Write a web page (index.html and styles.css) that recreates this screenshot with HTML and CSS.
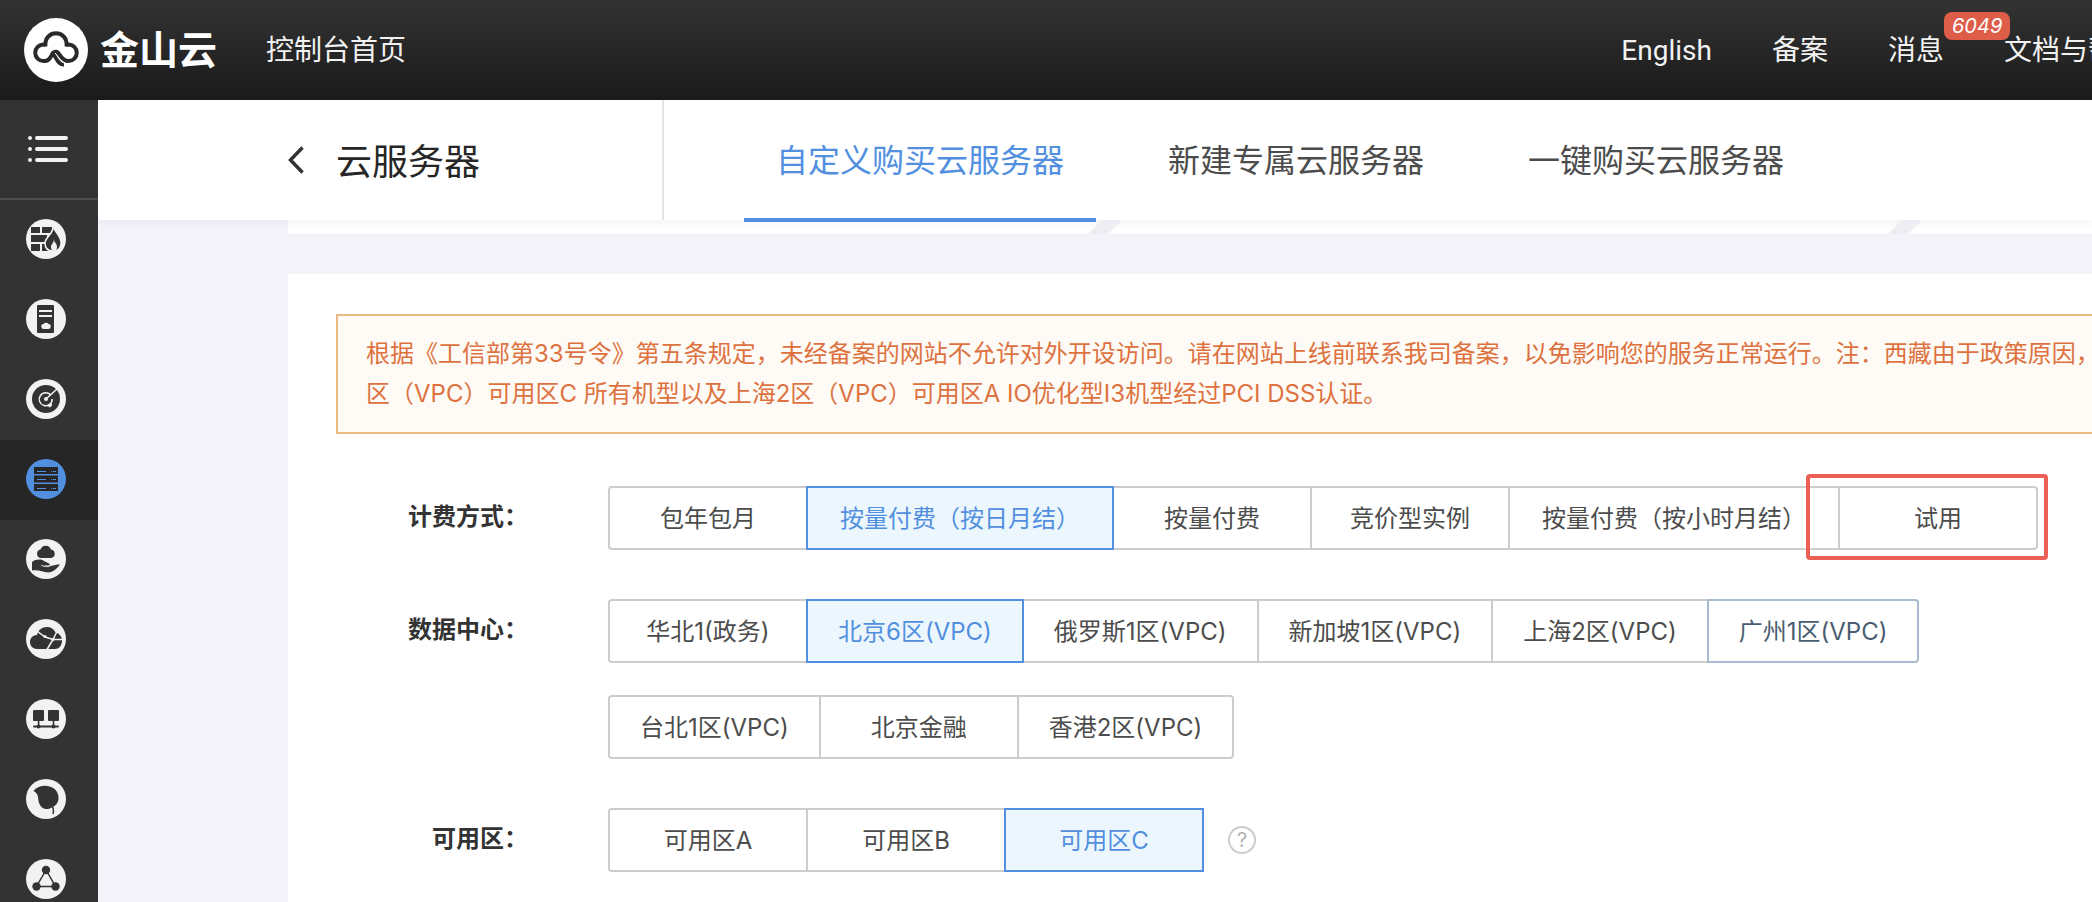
FILE: index.html
```html
<!DOCTYPE html>
<html lang="zh-CN">

<head>
    <meta charset="UTF-8">
    <meta name="viewport" content="width=device-width, initial-scale=1.0">
    <title>云服务器 - 金山云</title>
    <link rel="stylesheet" href="styles.css">
</head>

<body>
    <!-- Top bar -->
    <header class="topbar">
        <a class="logo" href="#">
            <svg class="logo-mark" viewBox="0 0 64 64" aria-hidden="true">
                <circle cx="32" cy="32" r="32" fill="#fff"/>
                <g fill="none" stroke="#2a2a2a" stroke-width="4" stroke-linejoin="round">
                    <path d="M21.500 26.500h-2a8.300 8.300 0 0 0 0 16.600c5.500 0 7.500-4 9.500-8.500"/>
                    <path d="M21.500 28.500c-1-8 4-13.200 10.500-13.200s11.500 5.200 10.500 13.200"/>
                    <path d="M42 26.500h2.500a8.300 8.300 0 0 1 0 16.600c-5 0-7-3.500-9-6.500s-4-4-7-1.500"/>
                    <path d="M28.500 35c3.500 2 4.500 12 11.500 11.500" stroke-width="4"/>
                </g>
                <path d="M31 35c3 3 4 9 10 10" fill="none" stroke="#fff" stroke-width="1"/>
            </svg>
            <span class="logo-text">金山云</span>
        </a>
        <a class="top-link" href="#">控制台首页</a>
        <nav class="top-nav">
            <a class="top-link" href="#">English</a>
            <a class="top-link" href="#">备案</a>
            <a class="top-link has-badge" href="#">消息<i class="badge">6049</i></a>
            <a class="top-link" href="#">文档与帮助</a>
        </nav>
    </header>

    <div class="layout">
        <!-- Side menu -->
        <nav class="sidebar">
            <button class="menu-toggle" type="button" aria-label="菜单">
                <svg width="40" height="26" viewBox="0 0 40 26" fill="#f2f2f2">
                    <circle cx="2" cy="2" r="2"/><rect x="7" y="0" width="33" height="4" rx="2"/>
                    <circle cx="2" cy="13" r="2"/><rect x="7" y="11" width="33" height="4" rx="2"/>
                    <circle cx="2" cy="24" r="2"/><rect x="7" y="22" width="33" height="4" rx="2"/>
                </svg>
            </button>
            <a class="side-item" href="#" aria-label="安全">
                <svg class="side-icon" viewBox="0 0 40 40">
                    <circle cx="20" cy="20" r="20" fill="#f2f2f2"/>
                    <path fill="#333" d="M5 8h9v6H5zM16 8h10v6H16zM5 16h16v7H5zM5 25h9v7H5zM16 25h8v7h-8z"/>
                    <path fill="#333" stroke="#f2f2f2" stroke-width="1.500" d="M27 7c1 6 9 10 8 18-.5 4-3 7-8 7-5 0-8-3-8-8 0-6 9-9 8-17z"/>
                    <path fill="#f2f2f2" d="M28 20c0 4 3 4 3 8 0 2-1 4-3 4s-3-2-3-4c0-3 3-4 3-8z"/>
                </svg>
            </a>
            <a class="side-item" href="#" aria-label="物理机">
                <svg class="side-icon" viewBox="0 0 40 40">
                    <circle cx="20" cy="20" r="20" fill="#f2f2f2"/>
                    <rect x="11" y="6" width="17" height="28" rx="1" fill="#333"/>
                    <path fill="#f2f2f2" d="M13 11h13v2H13zM13 16h13v2H13zM18 30a2.500 2.500 0 0 1-.5-5 3 3 0 0 1 5 0 2.500 2.500 0 0 1-.5 5z"/>
                </svg>
            </a>
            <a class="side-item" href="#" aria-label="监控">
                <svg class="side-icon" viewBox="0 0 40 40">
                    <circle cx="20" cy="20" r="20" fill="#f2f2f2"/>
                    <circle cx="20" cy="20" r="14" fill="#333"/>
                    <g fill="none" stroke="#f2f2f2" stroke-width="1.500">
                        <path d="M25 16.500a6.500 6.500 0 1 0 1.200 3.500M20 20L31 10"/>
                    </g>
                    <circle cx="20" cy="20" r="2" fill="#f2f2f2"/>
                    <path fill="#f2f2f2" d="M20.500 26.500l5-3 .5 3-2 2z"/>
                </svg>
            </a>
            <a class="side-item active" href="#" aria-label="云服务器">
                <svg class="side-icon" viewBox="0 0 40 40">
                    <circle cx="20" cy="20" r="20" fill="#528fdf"/>
                    <path fill="#262626" d="M8 8h24v7H8zM8 16.500h24v7H8zM8 25h24v7H8z"/>
                    <path stroke="#528fdf" d="M11 12.500h9M25 12.500h1M27 12.500h3M11 20.500h9M25 20.500h1M27 20.500h3M11 29.500h9M25 29.500h1M27 29.500h3"/>
                </svg>
            </a>
            <a class="side-item" href="#" aria-label="托管">
                <svg class="side-icon" viewBox="0 0 40 40">
                    <circle cx="20" cy="20" r="20" fill="#f2f2f2"/>
                    <path fill="#333" d="M15 19a4.300 4.300 0 0 1-.5-8.500 5.500 5.500 0 0 1 10.500 0 4.300 4.300 0 0 1 0 8.500z"/>
                    <path fill="#333" d="M6 23c4-3 9-3 12-1l5 2.500c1.500 1 1 2-1 2l-6-.5 6 1.500c3 0 6-2 12-2-3 4-7 8-12 8-5 0-9-3-16-2z"/>
                    <path fill="none" stroke="#f2f2f2" stroke-width=".8" d="M15 26c2 1.500 5 2 8 1.500"/>
                </svg>
            </a>
            <a class="side-item" href="#" aria-label="云网络">
                <svg class="side-icon" viewBox="0 0 40 40">
                    <circle cx="20" cy="20" r="20" fill="#f2f2f2"/>
                    <path fill="#333" d="M11 30c-4 0-7-3-7-7s3-7 7-7c1-5 5-8 10-8 4 0 7 2 8.500 5.500 4 1 6.500 4 6.500 8 0 5-3 8.500-7 8.500z"/>
                    <path fill="none" stroke="#f2f2f2" stroke-width="1.500" d="M11 12l8 6 8 2.500h9M27 20.500l4-8M27 20.500l-6 10"/>
                    <circle cx="19" cy="17.500" r="1.500" fill="#f2f2f2"/>
                    <circle cx="27" cy="20.500" r="1.500" fill="#f2f2f2"/>
                </svg>
            </a>
            <a class="side-item" href="#" aria-label="负载均衡">
                <svg class="side-icon" viewBox="0 0 40 40">
                    <circle cx="20" cy="20" r="20" fill="#f2f2f2"/>
                    <g fill="#333">
                        <rect x="7" y="11" width="11" height="11" rx="1"/>
                        <rect x="22" y="11" width="11" height="11" rx="1"/>
                        <rect x="7" y="26.500" width="26" height="2" rx="1"/>
                        <path d="M11.800 22h1.600v4h-1.600zM26.700 22h1.600v4h-1.600z"/>
                        <circle cx="12.500" cy="27.500" r="2"/><circle cx="27.500" cy="27.500" r="2"/>
                    </g>
                </svg>
            </a>
            <a class="side-item" href="#" aria-label="存储">
                <svg class="side-icon" viewBox="0 0 40 40">
                    <circle cx="20" cy="20" r="20" fill="#f2f2f2"/>
                    <path fill="#333" d="M7.500 12c4-5 11-6 16-4.500 6 1.500 9.500 6.500 9 12.500-.5 4-3 7-6 8-3 2.500-8 3-11 0-3-3-3-7-3.500-10-.5-3-1.500-4-4.500-6z"/>
                    <path fill="none" stroke="#333" stroke-width="1.500" d="M26 27c1.500 2 2 4 1 8"/>
                </svg>
            </a>
            <a class="side-item" href="#" aria-label="节点">
                <svg class="side-icon" viewBox="0 0 40 40">
                    <circle cx="20" cy="20" r="20" fill="#f2f2f2"/>
                    <path fill="none" stroke="#333" stroke-width="1.500" d="M20 11L10.500 27.500h19z"/>
                    <g fill="#333">
                        <circle cx="20" cy="11" r="4.200"/><circle cx="10.500" cy="27.500" r="4.200"/><circle cx="29.500" cy="27.500" r="4.200"/>
                    </g>
                </svg>
            </a>
        </nav>

        <main class="main">
            <!-- Page title and tabs -->
            <div class="page-head">
                <div class="page-title">
                    <a class="back" href="#" aria-label="返回">
                        <svg width="16" height="28" viewBox="0 0 16 28" fill="none" stroke="#333" stroke-width="3.500">
                            <path d="M14.500 1.500L2.500 14l12 12.500"/>
                        </svg>
                    </a>
                    <h1>云服务器</h1>
                </div>
                <nav class="tabs">
                    <a class="tab active" href="#">自定义购买云服务器</a>
                    <a class="tab" href="#">新建专属云服务器</a>
                    <a class="tab" href="#">一键购买云服务器</a>
                </nav>
            </div>

            <div class="content">
                <!-- Bottom edge of the step bar -->
                <div class="steps">
                    <div class="step first"></div>
                    <div class="step"></div>
                </div>

                <section class="panel">
                    <p class="notice">
                        根据《工信部第33号令》第五条规定，未经备案的网站不允许对外开设访问。请在网站上线前联系我司备案，以免影响您的服务正常运行。注：西藏由于政策原因，<br>
                        区（VPC）可用区C 所有机型以及上海2区（VPC）可用区A IO优化型I3机型经过PCI DSS认证。
                    </p>

                    <div class="form-row">
                        <div class="form-label" id="billing">计费方式：</div>
                        <div class="options" role="group" aria-labelledby="billing">
                            <div class="segment">
                                <button type="button" class="option">包年包月</button>
                                <button type="button" class="option selected">按量付费（按日月结）</button>
                                <button type="button" class="option">按量付费</button>
                                <button type="button" class="option">竞价型实例</button>
                                <button type="button" class="option">按量付费（按小时月结）</button>
                                <div class="marked">
                                    <button type="button" class="option">试用</button>
                                    <span class="mark"></span>
                                </div>
                            </div>
                        </div>
                    </div>

                    <div class="form-row">
                        <div class="form-label" id="region">数据中心：</div>
                        <div class="options regions" role="group" aria-labelledby="region">
                            <div class="segment">
                                <button type="button" class="option">华北1(政务)</button>
                                <button type="button" class="option selected">北京6区(VPC)</button>
                                <button type="button" class="option">俄罗斯1区(VPC)</button>
                                <button type="button" class="option">新加坡1区(VPC)</button>
                                <button type="button" class="option">上海2区(VPC)</button>
                                <button type="button" class="option hovered">广州1区(VPC)</button>
                            </div>
                            <div class="segment">
                                <button type="button" class="option">台北1区(VPC)</button>
                                <button type="button" class="option">北京金融</button>
                                <button type="button" class="option">香港2区(VPC)</button>
                            </div>
                        </div>
                    </div>

                    <div class="form-row">
                        <div class="form-label" id="zone">可用区：</div>
                        <div class="options" role="group" aria-labelledby="zone">
                            <div class="segment">
                                <button type="button" class="option">可用区A</button>
                                <button type="button" class="option">可用区B</button>
                                <button type="button" class="option selected">可用区C</button>
                                <button type="button" class="help">?</button>
                            </div>
                        </div>
                    </div>
                </section>
            </div>
        </main>
    </div>
</body>

</html>
```
FILE: styles.css
```css
* {
    box-sizing: border-box;
}

html,
body {
    height: 100%;
}

body {
    margin: 0;
    display: flex;
    flex-direction: column;
    overflow: hidden;
    background-color: #f4f3f9;
    color: #333;
    font-family: Inter, "Noto Sans CJK SC", sans-serif;
    font-size: 24px;
}

a {
    color: inherit;
    text-decoration: none;
}

button {
    font: inherit;
    cursor: pointer;
}

svg {
    display: block;
}

/* Top bar */
.topbar {
    display: flex;
    align-items: center;
    flex: none;
    height: 100px;
    padding-left: 24px;
    overflow: hidden;
    background: linear-gradient(#333, #1a1a1a);
    color: #f2f2f2;
    white-space: nowrap;
}

.logo {
    display: flex;
    align-items: center;
    gap: 12px;
    margin-right: 49px;
    color: #fff;
}

.logo-mark {
    width: 64px;
    height: 64px;
}

.logo-text {
    font-size: 39px;
    font-weight: bold;
    line-height: 64px;
}

.top-link {
    padding-top: 2px;
    font-family: Roboto, "Noto Sans CJK SC", sans-serif;
    font-size: 28px;
    line-height: 40px;
}

/* The last link runs past the window edge */
.top-nav {
    display: flex;
    gap: 60px;
    margin-left: auto;
    margin-right: -52px;
}

.has-badge {
    position: relative;
}

.badge {
    position: absolute;
    left: 100%;
    top: -17px;
    height: 28px;
    padding: 0 8px;
    border-radius: 8px;
    background-color: #de5d49;
    color: #fff;
    font-family: Inter, sans-serif;
    font-size: 20px;
    line-height: 28px;
}

/* Side menu */
.layout {
    display: flex;
    flex: 1;
    min-height: 0;
}

.sidebar {
    flex: none;
    width: 98px;
    overflow: hidden;
    background-color: #333;
}

.menu-toggle {
    display: flex;
    align-items: center;
    width: 100%;
    height: 100px;
    padding: 0 28px;
    border: 0;
    border-bottom: 2px solid #4d4d4d;
    background: none;
}

.side-item {
    display: block;
    height: 80px;
    padding: 19px 26px;
}

.side-item.active {
    background-color: #262626;
}

.side-icon {
    width: 40px;
    height: 40px;
}

/* Page title and tabs */
.main {
    flex: 1;
    min-width: 0;
    overflow: hidden;
}

.page-head {
    position: relative;
    display: flex;
    height: 120px;
    background-color: #fff;
    box-shadow: 0 2px 12px rgba(0, 0, 0, 0.06);
    white-space: nowrap;
}

.page-title {
    display: flex;
    align-items: center;
    gap: 32px;
    width: 566px;
    padding-left: 190px;
    border-right: 2px solid #e5e5e5;
}

h1 {
    margin: 0;
    padding-bottom: 2px;
    color: #262626;
    font-size: 36px;
    font-weight: 400;
}

.tabs {
    display: flex;
    gap: 40px;
    padding-left: 80px;
}

.tab {
    height: 122px;
    padding: 0 32px;
    border-bottom: 4px solid transparent;
    color: #4c4c4c;
    font-size: 32px;
    line-height: 122px;
}

.tab.active {
    border-bottom-color: #528fdf;
    color: #528fdf;
}

.content {
    padding-left: 190px;
}

.steps {
    display: flex;
    height: 14px;
    margin-bottom: 40px;
    overflow: hidden;
    background-color: #fff;
}

.step {
    display: flex;
    flex: none;
    justify-content: flex-end;
    width: 800px;
}

.step.first {
    width: 834px;
}

/* Slanted divider between steps */
.step::after {
    content: "";
    width: 34px;
    background-color: #eeedf3;
    clip-path: polygon(14px 0, 34px 0, 20px 100%, 0 100%);
}

/* Form */
.panel {
    padding: 40px 0 60px 48px;
    background-color: #fff;
}

.notice {
    margin: 0 0 52px;
    padding: 18px 28px;
    overflow: hidden;
    border: 2px solid #ebba82;
    border-right: 0;
    background-color: #fefaf5;
    color: #dd7240;
    line-height: 40px;
    white-space: nowrap;
}

.form-row {
    display: flex;
    gap: 80px;
    margin-bottom: 49px;
}

.form-label {
    flex: none;
    width: 192px;
    color: #333;
    font-weight: bold;
    line-height: 62px;
    text-align: right;
}

.options {
    display: flex;
    flex-direction: column;
    gap: 32px;
}

.segment {
    display: flex;
    align-items: center;
}

.option {
    min-width: 200px;
    height: 64px;
    margin-right: -2px;
    padding: 0 32px 4px;
    border: 2px solid #ccc;
    background-color: #fff;
    color: #4c4c4c;
    white-space: nowrap;
}

.regions .option {
    padding: 0 30px 4px;
}

.option:first-child {
    border-radius: 4px 0 0 4px;
}

.option:last-child,
.marked .option {
    border-radius: 0 4px 4px 0;
}

.option.selected {
    position: relative;
    border-color: #528fdf;
    background-color: #ebf6fd;
    color: #528fdf;
}

.option.hovered {
    position: relative;
    border-color: #a8bbd0;
    color: #4a5d70;
}

/* Red frame round the trial option */
.marked {
    position: relative;
}

.mark {
    position: absolute;
    top: -12px;
    right: -12px;
    bottom: -10px;
    left: -32px;
    border: 4px solid #ec5f55;
    border-radius: 4px;
    pointer-events: none;
}

.help {
    width: 28px;
    height: 28px;
    margin-left: 26px;
    padding: 0;
    border: 2px solid #ccc;
    border-radius: 50%;
    background: none;
    color: #b3b3b3;
    font-size: 20px;
    line-height: 24px;
}
```
